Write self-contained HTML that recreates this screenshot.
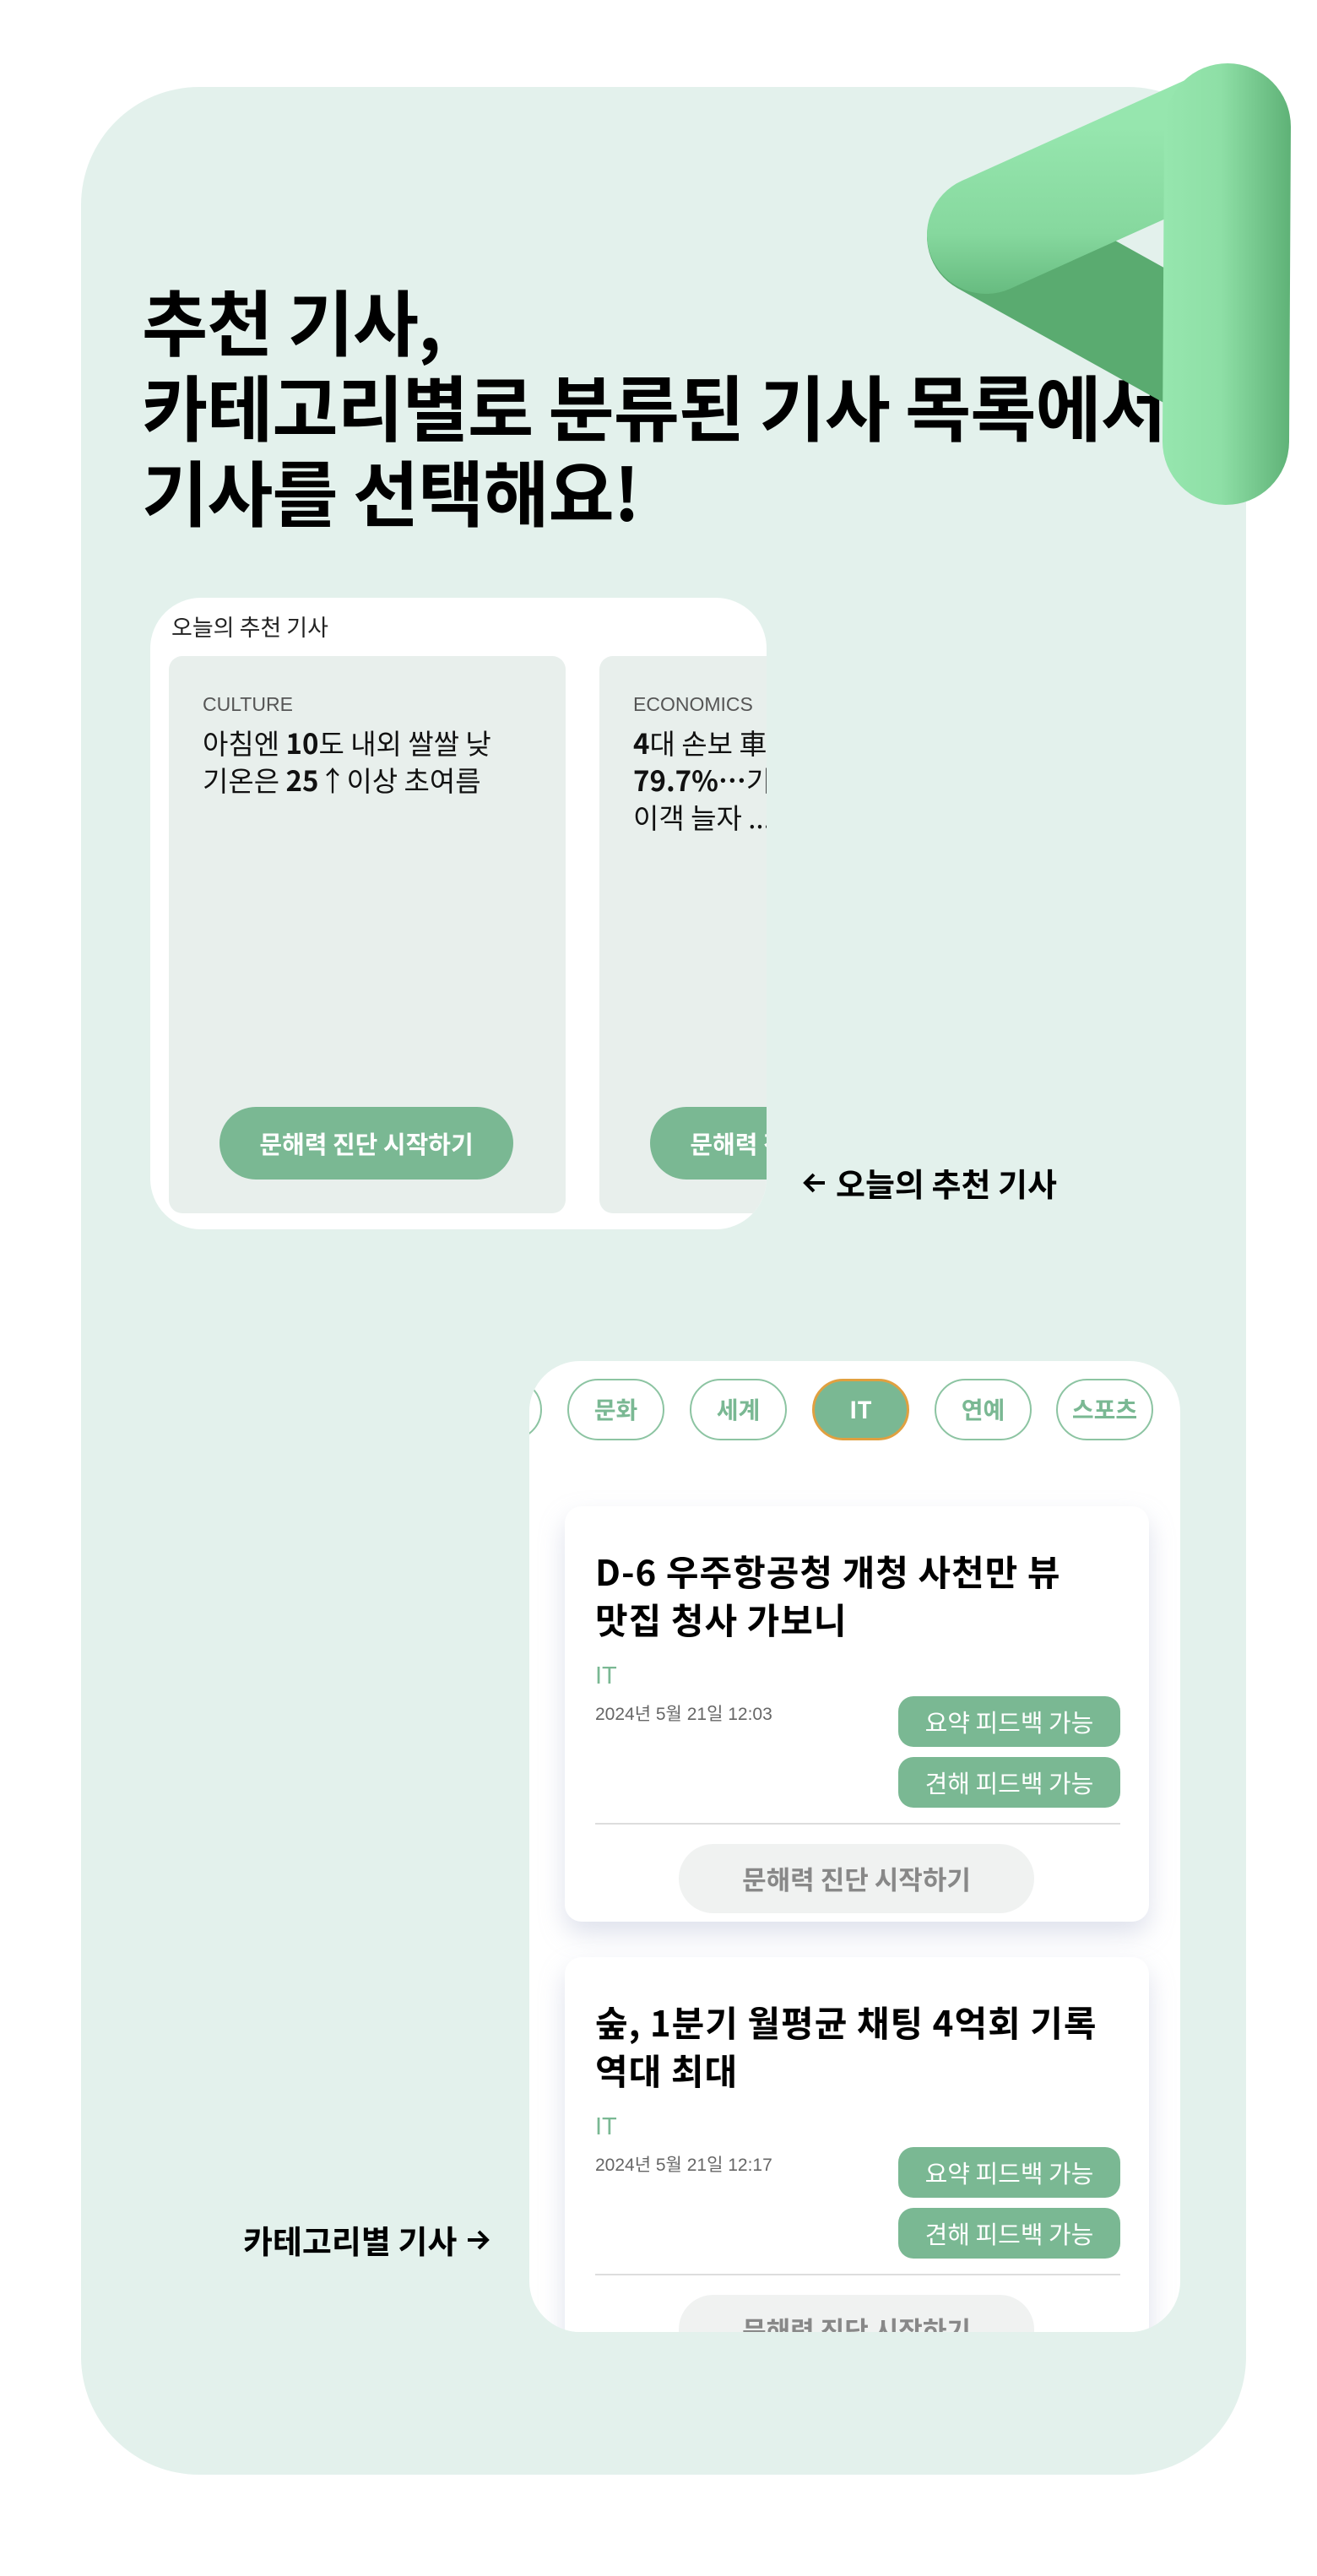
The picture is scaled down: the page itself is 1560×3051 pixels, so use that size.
<!DOCTYPE html>
<html><head><meta charset="utf-8">
<style>
*{margin:0;padding:0;box-sizing:border-box}
body{width:1560px;height:3051px;background:#fff;position:relative;overflow:hidden;font-family:"Liberation Sans","Noto Sans CJK KR",sans-serif;color:#111}
.a{position:absolute}
.bg{left:96px;top:103px;width:1380px;height:2828px;background:#e3f1ec;border-radius:140px}
h1{position:absolute;left:168px;top:328px;font-size:85px;line-height:101px;font-weight:700;letter-spacing:-1px;color:#000;font-family:"Noto Sans CJK KR",sans-serif;white-space:nowrap}
.rec{left:178px;top:708px;width:730px;height:748px;background:#fff;border-radius:60px;overflow:hidden}
.rt{left:25px;top:14px;font-size:27px;color:#222;font-family:"Noto Sans CJK KR",sans-serif}
.rc{top:69px;width:470px;height:660px;background:#e8efec;border-radius:16px}
.cat{left:40px;top:44px;font-size:23px;color:#555;font-family:"Liberation Sans",sans-serif}
.ttl{left:40px;top:80px;font-size:33px;line-height:44px;color:#111;white-space:nowrap;font-family:"Noto Sans CJK KR",sans-serif}
.btn{left:60px;top:534px;width:348px;height:86px;border-radius:43px;background:#7ab893;color:#fff;font-size:29px;font-weight:700;text-align:center;line-height:86px;font-family:"Noto Sans CJK KR",sans-serif}
.lbl{font-size:38px;font-weight:700;color:#000;white-space:nowrap;font-family:"Noto Sans CJK KR",sans-serif;display:flex;align-items:center;gap:10px}
.cp{left:627px;top:1612px;width:771px;height:1150px;background:#fff;border-radius:60px;overflow:hidden}
.chip{top:21px;width:115px;height:73px;border:2px solid #8cc4a2;border-radius:37px;color:#7ab893;font-size:28px;font-weight:700;text-align:center;line-height:69px;background:#fff;font-family:"Noto Sans CJK KR",sans-serif}
.card{left:42px;width:692px;height:492px;background:#fff;border-radius:20px;box-shadow:0 14px 30px rgba(160,170,200,.35)}
.ct{left:36px;top:48px;font-size:42px;line-height:57px;font-weight:700;color:#000;white-space:nowrap;font-family:"Noto Sans CJK KR",sans-serif;letter-spacing:1px}
.it{left:36px;top:185px;font-size:29px;color:#7ab893}
.dt{left:36px;top:230px;font-size:21px;color:#666}
.bd{left:395px;width:263px;height:60px;border-radius:18px;background:#7ab893;color:#fff;font-size:29px;text-align:center;line-height:60px;font-family:"Noto Sans CJK KR",sans-serif}
.dv{left:36px;top:375px;width:622px;height:2px;background:#ddd}
.gb{left:135px;top:400px;width:421px;height:82px;border-radius:41px;background:#f0f2f1;color:#888;font-size:31px;text-align:center;line-height:82px;font-weight:700;font-family:"Noto Sans CJK KR",sans-serif}
</style></head><body>
<div class="a bg"></div>
<h1>추천 기사,<br>카테고리별로 분류된 기사 목록에서<br>기사를 선택해요!</h1>
<svg class="a" style="left:0;top:0" width="1560" height="700" viewBox="0 0 1560 700">
<defs>
<linearGradient id="g1" gradientUnits="userSpaceOnUse" x1="1377" y1="0" x2="1530" y2="0"><stop offset="0" stop-color="#96e6ae"/><stop offset=".45" stop-color="#8edfa6"/><stop offset="1" stop-color="#5eb176"/></linearGradient>
<linearGradient id="g2" gradientUnits="userSpaceOnUse" x1="0" y1="150" x2="0" y2="360"><stop offset="0" stop-color="#96e6ae"/><stop offset=".6" stop-color="#86d89e"/><stop offset="1" stop-color="#62b77b"/></linearGradient>
</defs>
<line x1="1168" y1="280" x2="1420" y2="420" stroke="#5aab70" stroke-width="140" stroke-linecap="round"/>
<line x1="1168" y1="278" x2="1452" y2="150" stroke="url(#g2)" stroke-width="140" stroke-linecap="round"/>
<line x1="1454" y1="150" x2="1452" y2="523" stroke="url(#g1)" stroke-width="150" stroke-linecap="round"/>
</svg>

<div class="a rec">
 <div class="a rt">오늘의 추천 기사</div>
 <div class="a rc" style="left:22px">
  <div class="a cat">CULTURE</div>
  <div class="a ttl">아침엔 <b>10</b>도 내외 쌀쌀 낮<br>기온은 <b>25</b>↑이상 초여름</div>
  <div class="a btn">문해력 진단 시작하기</div>
 </div>
 <div class="a rc" style="left:532px">
  <div class="a cat">ECONOMICS</div>
  <div class="a ttl"><b>4</b>대 손보 車<br><b>79.7%…</b>기<br>이객 늘자 ...</div>
  <div class="a btn">문해력 진단 시작하기</div>
 </div>
</div>
<div class="a lbl" style="left:950px;top:1373px"><svg width="30" height="30" viewBox="0 0 30 30"><path d="M27 15H5M14 5L4 15l10 10" fill="none" stroke="#000" stroke-width="4"/></svg>오늘의 추천 기사</div>

<div class="a cp">
 <div class="a chip" style="left:-100px">정치</div>
 <div class="a chip" style="left:45px">문화</div>
 <div class="a chip" style="left:190px">세계</div>
 <div class="a chip" style="left:335px;background:#7ab893;color:#fff;border:3px solid #e0a040;line-height:67px">IT</div>
 <div class="a chip" style="left:480px">연예</div>
 <div class="a chip" style="left:624px">스포츠</div>
 <div class="a card" style="top:172px">
  <div class="a ct">D-6 우주항공청 개청 사천만 뷰<br>맛집 청사 가보니</div>
  <div class="a it">IT</div>
  <div class="a dt">2024년 5월 21일 12:03</div>
  <div class="a bd" style="top:225px">요약 피드백 가능</div>
  <div class="a bd" style="top:297px">견해 피드백 가능</div>
  <div class="a dv"></div>
  <div class="a gb">문해력 진단 시작하기</div>
 </div>
 <div class="a card" style="top:706px">
  <div class="a ct">숲, 1분기 월평균 채팅 4억회 기록<br>역대 최대</div>
  <div class="a it">IT</div>
  <div class="a dt">2024년 5월 21일 12:17</div>
  <div class="a bd" style="top:225px">요약 피드백 가능</div>
  <div class="a bd" style="top:297px">견해 피드백 가능</div>
  <div class="a dv"></div>
  <div class="a gb">문해력 진단 시작하기</div>
 </div>
</div>
<div class="a lbl" style="left:288px;top:2625px">카테고리별 기사<svg width="30" height="30" viewBox="0 0 30 30"><path d="M3 15h22M16 5l10 10-10 10" fill="none" stroke="#000" stroke-width="4"/></svg></div>
</body></html>
